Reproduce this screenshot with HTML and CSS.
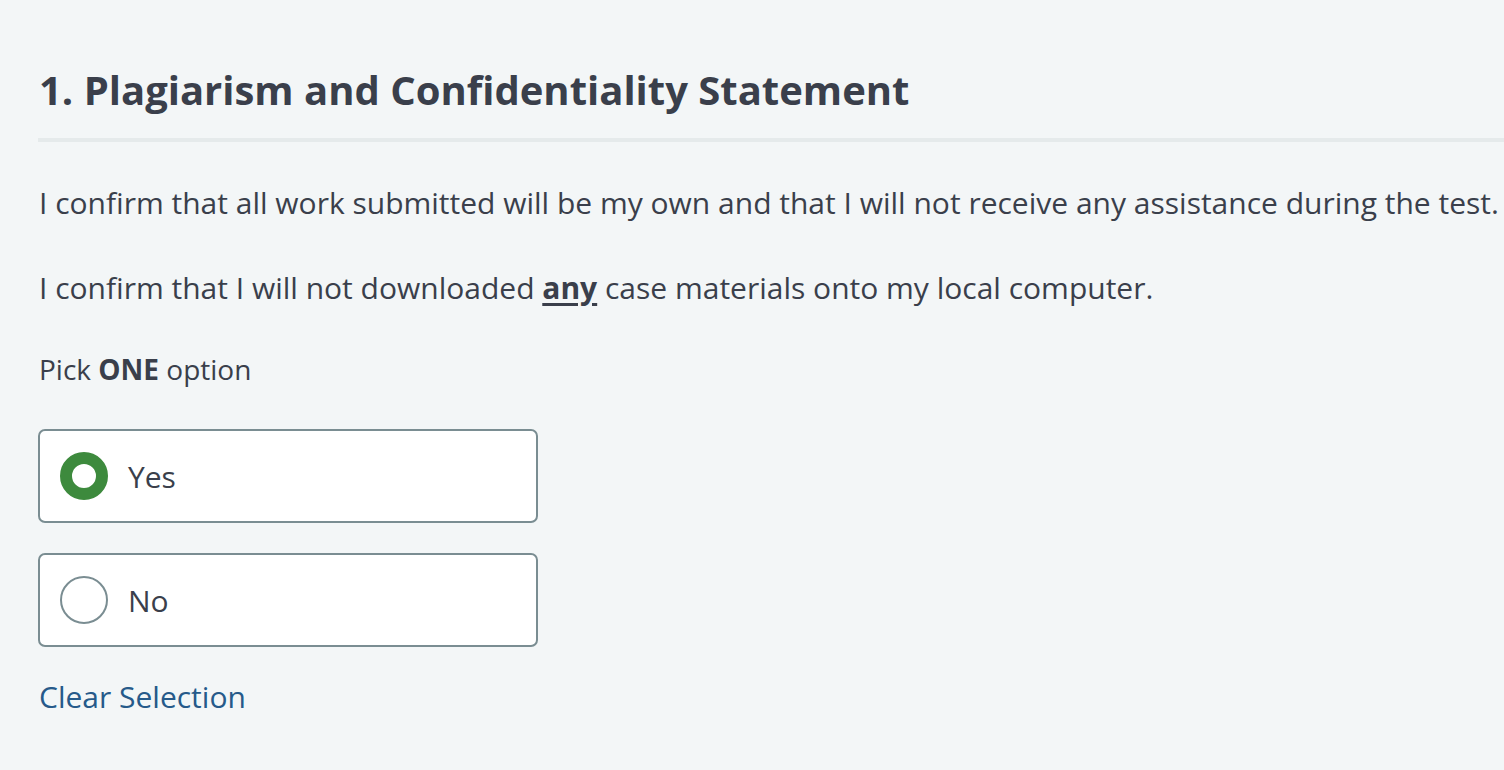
FILE: index.html
```html
<!DOCTYPE html>
<html>
<head>
<meta charset="utf-8">
<link rel="stylesheet" href="styles.css">
</head>
<body>
<main class="question">
  <h1 class="title">1. Plagiarism and Confidentiality Statement</h1>
  <p class="text">I confirm that all work submitted will be my own and that I will not receive any assistance during the test.</p>
  <p class="text">I confirm that I will not downloaded <strong class="u">any</strong> case materials onto my local computer.</p>
  <p class="pick">Pick <strong>ONE</strong> option</p>
  <div class="options">
    <label class="option"><span class="radio checked"></span><span class="label">Yes</span></label>
    <label class="option"><span class="radio"></span><span class="label">No</span></label>
  </div>
  <a class="clear" href="#">Clear Selection</a>
</main>
</body>
</html>
```

FILE: styles.css
```css
html, body {
  margin: 0;
  padding: 0;
  background: #f3f6f7;
}
body {
  font-family: "Open Sans", "Noto Sans", sans-serif;
  color: #3a3f4b;
}
.question {
  padding: 58px 0 0 38px;
}
.title {
  margin: 0;
  font-size: 40px;
  font-weight: 700;
  line-height: 64px;
  padding-left: 1px;
  padding-bottom: 16px;
  border-bottom: 4px solid #e5eaeb;
}
.text {
  margin: 39px 0 0 1px;
  font-size: 30px;
  line-height: 44px;
}
.text + .text {
  margin-top: 41px;
}
.u {
  text-decoration: underline;
  text-underline-offset: 4px;
}
.pick {
  margin: 39px 0 0 1px;
  font-size: 28px;
  line-height: 40px;
}
.options {
  margin-top: 40px;
  display: flex;
  flex-direction: column;
  gap: 30px;
  width: 500px;
}
.option {
  display: flex;
  align-items: center;
  box-sizing: border-box;
  height: 94px;
  border: 2px solid #7a8d92;
  border-radius: 7px;
  background: #fff;
  padding-left: 20px;
}
.radio {
  width: 48px;
  height: 48px;
  box-sizing: border-box;
  border: 2px solid #7a8d92;
  border-radius: 50%;
  background: #fff;
}
.radio.checked {
  border: 12px solid #3d8a3d;
}
.label {
  margin-left: 20px;
  font-size: 30px;
}
.clear {
  display: inline-block;
  margin: 29px 0 0 1px;
  font-size: 30px;
  color: #265a8a;
  text-decoration: none;
}
```
